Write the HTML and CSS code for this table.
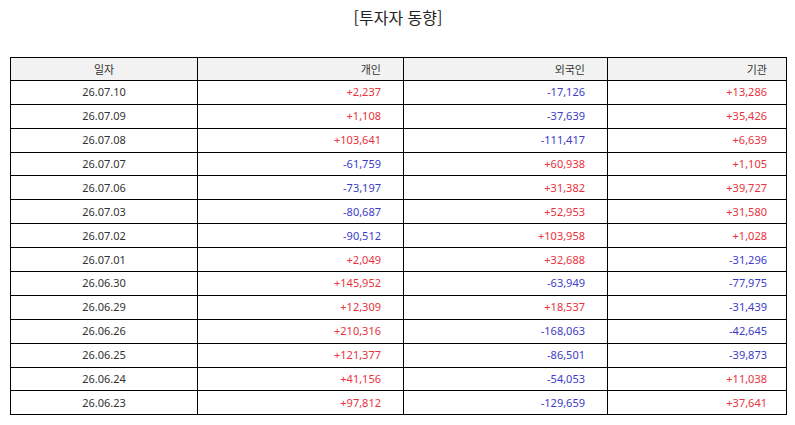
FILE: index.html
```html
<!DOCTYPE html>
<html lang="ko">
<head>
<meta charset="utf-8">
<link rel="stylesheet" href="styles.css">
</head>
<body>
<div class="page">
  <h1 class="title">[투자자 동향]</h1>
  <table class="grid">
    <colgroup>
      <col class="w-date">
      <col class="w-ind">
      <col class="w-for">
      <col class="w-ins">
    </colgroup>
    <thead>
      <tr>
        <th class="c-date">일자</th>
        <th class="c-ind">개인</th>
        <th class="c-for">외국인</th>
        <th class="c-ins">기관</th>
      </tr>
    </thead>
    <tbody>
      <tr><td class="c-date">26.07.10</td><td class="c-ind up">+2,237</td><td class="c-for down">-17,126</td><td class="c-ins up">+13,286</td></tr>
      <tr><td class="c-date">26.07.09</td><td class="c-ind up">+1,108</td><td class="c-for down">-37,639</td><td class="c-ins up">+35,426</td></tr>
      <tr><td class="c-date">26.07.08</td><td class="c-ind up">+103,641</td><td class="c-for down">-111,417</td><td class="c-ins up">+6,639</td></tr>
      <tr><td class="c-date">26.07.07</td><td class="c-ind down">-61,759</td><td class="c-for up">+60,938</td><td class="c-ins up">+1,105</td></tr>
      <tr><td class="c-date">26.07.06</td><td class="c-ind down">-73,197</td><td class="c-for up">+31,382</td><td class="c-ins up">+39,727</td></tr>
      <tr><td class="c-date">26.07.03</td><td class="c-ind down">-80,687</td><td class="c-for up">+52,953</td><td class="c-ins up">+31,580</td></tr>
      <tr><td class="c-date">26.07.02</td><td class="c-ind down">-90,512</td><td class="c-for up">+103,958</td><td class="c-ins up">+1,028</td></tr>
      <tr><td class="c-date">26.07.01</td><td class="c-ind up">+2,049</td><td class="c-for up">+32,688</td><td class="c-ins down">-31,296</td></tr>
      <tr><td class="c-date">26.06.30</td><td class="c-ind up">+145,952</td><td class="c-for down">-63,949</td><td class="c-ins down">-77,975</td></tr>
      <tr><td class="c-date">26.06.29</td><td class="c-ind up">+12,309</td><td class="c-for up">+18,537</td><td class="c-ins down">-31,439</td></tr>
      <tr><td class="c-date">26.06.26</td><td class="c-ind up">+210,316</td><td class="c-for down">-168,063</td><td class="c-ins down">-42,645</td></tr>
      <tr><td class="c-date">26.06.25</td><td class="c-ind up">+121,377</td><td class="c-for down">-86,501</td><td class="c-ins down">-39,873</td></tr>
      <tr><td class="c-date">26.06.24</td><td class="c-ind up">+41,156</td><td class="c-for down">-54,053</td><td class="c-ins up">+11,038</td></tr>
      <tr><td class="c-date">26.06.23</td><td class="c-ind up">+97,812</td><td class="c-for down">-129,659</td><td class="c-ins up">+37,641</td></tr>
    </tbody>
  </table>
</div>
</body>
</html>
```
FILE: styles.css
```css
html, body {
  margin: 0;
  padding: 0;
  background: #fff;
}
body {
  font-family: "Noto Sans", "Noto Sans CJK KR", sans-serif;
  color: #333;
}
.page {
  padding: 0 9px 0 10px;
}
.title {
  margin: 0;
  height: 57px;
  padding-top: 5px;
  box-sizing: border-box;
  text-align: center;
  font-size: 16px;
  font-weight: normal;
  line-height: 24px;
  color: #222;
  font-family: "Noto Sans CJK KR", sans-serif;
}
.grid {
  width: 776px;
  border-collapse: collapse;
  table-layout: fixed;
  font-size: 11px;
}
.w-date { width: 187px; }
.w-ind { width: 206px; }
.w-for { width: 204px; }
.w-ins { width: 179px; }
.grid th, .grid td {
  border: 1px solid #000;
  height: 22.9px;
  padding: 0;
  line-height: 14px;
}
.grid th {
  background: #f2f2f2;
  font-weight: normal;
  color: #333;
  font-family: "Noto Sans CJK KR", sans-serif;
  height: 21.9px;
}
.c-date { text-align: center; }
.c-ind { text-align: right; padding-right: 22px !important; }
.c-for { text-align: right; padding-right: 22px !important; }
.c-ins { text-align: right; padding-right: 19px !important; }
.up { color: #e8323c; }
.down { color: #3c3cc8; }
```
